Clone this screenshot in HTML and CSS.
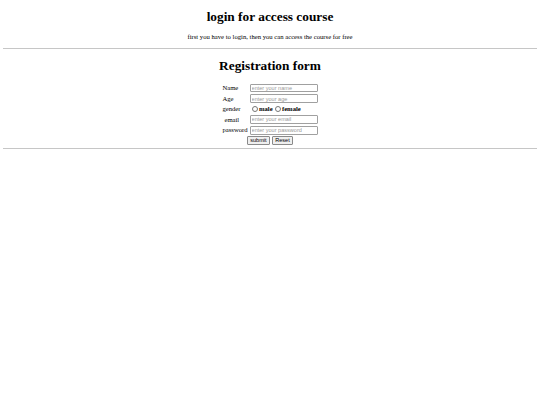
FILE: index.html
```html
<!DOCTYPE html>
<html>
<head>
<meta charset="utf-8">
<link rel="stylesheet" href="styles.css">
</head>
<body class="body">
<div class="wrap">
<h1 class="title title-top">login for access course</h1>
<p class="intro">first you have to login, then you can access the course for free</p>
<hr class="rule">
<h1 class="title title-form">Registration form</h1>
<form class="form">
<table class="tbl">
<tr><td class="lbl">Name</td><td><input class="field" type="text" placeholder="enter your name"></td></tr>
<tr><td class="lbl">Age</td><td><input class="field" type="text" placeholder="enter your age"></td></tr>
<tr><td class="lbl">gender</td><td class="radios"><input class="radio" type="radio" name="g"><b>male</b><input class="radio" type="radio" name="g"><b>female</b></td></tr>
<tr><td class="lbl lbl-indent">email</td><td><input class="field" type="text" placeholder="enter your email"></td></tr>
<tr><td class="lbl">password</td><td><input class="field" type="password" placeholder="enter your password"></td></tr>
</table>
<div class="actions"><input class="btn" type="submit" value="submit"> <input class="btn" type="reset" value="Reset"></div>
</form>
<hr class="rule">
</div>
</body>
</html>
```
FILE: styles.css
```css
.body {
  margin: 3.33px;
  font-family: "Liberation Serif", "Times New Roman", serif;
  font-size: 6.67px;
  color: #000;
  background: #fff;
}
.wrap { text-align: center; }
.title {
  font-size: 13.33px;
  font-weight: bold;
  margin: 8.93px 0;
  line-height: 15.3px;
}
.title-top { margin-top: 5.9px; }
.title-form { margin-bottom: 8.9px; }
.intro {
  margin: 6.67px 0;
  line-height: 7.7px;
}
.rule {
  border: 0;
  border-top: 1px solid #c6c6c6;
  height: 0;
  margin: 3.33px 0;
}
.form { margin: 0; }
.tbl {
  margin: 0 auto;
  text-align: left;
  border-spacing: 1px;
}
.tbl td {
  padding: 0.5px;
  line-height: 7.7px;
}
.lbl-indent { padding-left: 2.5px !important; }
.field {
  box-sizing: border-box;
  width: 68px;
  height: 8.75px;
  margin: 0;
  padding: 0 1px;
  border: 1px solid #a0a0a0;
  border-radius: 1px;
  font-family: "Liberation Sans", Arial, sans-serif;
  font-size: 5.56px;
  vertical-align: middle;
}
.field::placeholder { color: #9a9a9a; }
.radio {
  width: 6px;
  height: 6px;
  margin: 1px 1.25px 0 2.1px;
  vertical-align: -0.8px;
}
.actions {
  line-height: 8.75px;
  margin-top: -0.5px;
  margin-bottom: 0.5px;
}
.btn {
  box-sizing: border-box;
  height: 8.75px;
  margin: 0;
  padding: 0 2.5px;
  font-family: "Liberation Sans", Arial, sans-serif;
  font-size: 5.56px;
  background: #efefef;
  border: 1px solid #8a8a8a;
  border-radius: 1px;
  vertical-align: middle;
  color: #000;
}
```
